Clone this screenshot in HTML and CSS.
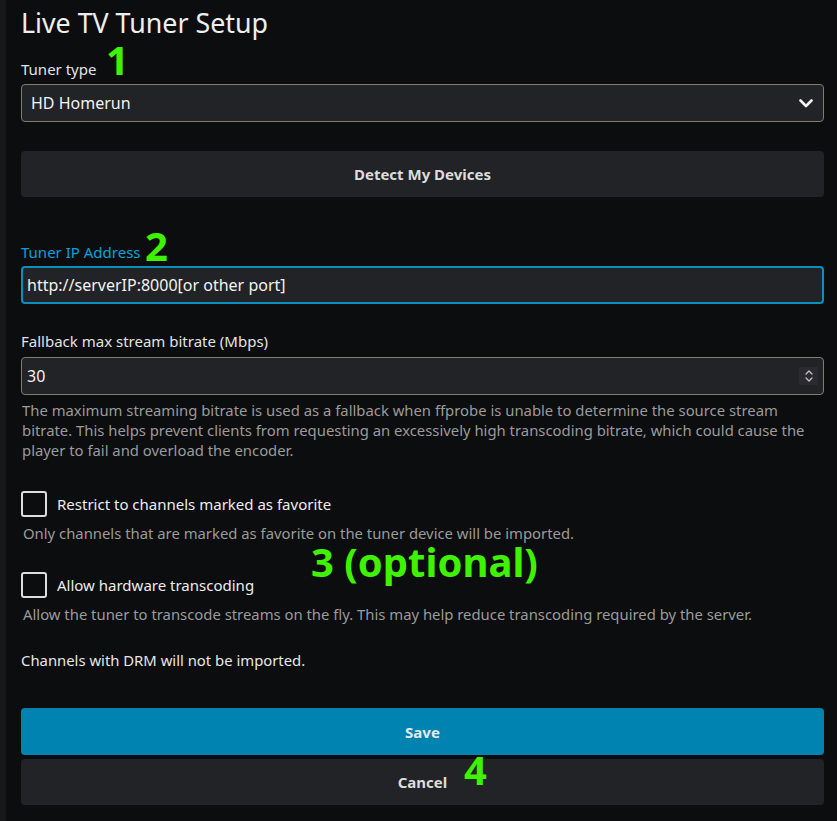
FILE: index.html
```html
<!DOCTYPE html>
<html lang="en">
<head>
  <meta charset="UTF-8" />
  <meta name="viewport" content="width=device-width, initial-scale=1" />
  <title>Live TV Tuner Setup</title>
  <link rel="stylesheet" href="styles.css">
</head>
<body>
  <div class="side-strip"></div>
  <main class="page">
    <h1 class="page-title">Live TV Tuner Setup</h1>

    <div class="field field-type">
      <label class="field-label">Tuner type</label>
      <span class="note note-1">1</span>
      <div class="select-box">
        <span>HD Homerun</span>
        <svg class="chevron" width="14" height="9" viewBox="0 0 14 9"><path d="M1.5 1.5 L7 7 L12.5 1.5" fill="none" stroke="#f2f2f2" stroke-width="2.6" stroke-linecap="round" stroke-linejoin="round"/></svg>
      </div>
    </div>

    <button class="btn btn-detect">Detect My Devices</button>

    <div class="field field-ip">
      <label class="field-label focused">Tuner IP Address</label>
      <span class="note note-2">2</span>
      <div class="text-input active">http://serverIP:8000[or other port]</div>
    </div>

    <div class="field field-bitrate">
      <label class="field-label">Fallback max stream bitrate (Mbps)</label>
      <div class="text-input">
        <span>30</span>
        <span class="spinner">
          <svg width="10" height="16" viewBox="0 0 10 16"><path d="M2 6 L5 3 L8 6 M2 10 L5 13 L8 10" fill="none" stroke="#c9c6cc" stroke-width="1.2" stroke-linecap="round" stroke-linejoin="round"/></svg>
        </span>
      </div>
      <p class="help">The maximum streaming bitrate is used as a fallback when ffprobe is unable to determine the source stream bitrate. This helps prevent clients from requesting an excessively high transcoding bitrate, which could cause the player to fail and overload the encoder.</p>
    </div>

    <div class="options">
      <span class="note note-3">3 (optional)</span>
      <div class="check-row">
        <span class="checkbox"></span>
        <span>Restrict to channels marked as favorite</span>
      </div>
      <p class="help help-check">Only channels that are marked as favorite on the tuner device will be imported.</p>

      <div class="check-row second">
        <span class="checkbox"></span>
        <span>Allow hardware transcoding</span>
      </div>
      <p class="help help-check">Allow the tuner to transcode streams on the fly. This may help reduce transcoding required by the server.</p>
    </div>

    <p class="drm-note">Channels with DRM will not be imported.</p>

    <div class="actions">
      <button class="btn btn-save">Save</button>
      <button class="btn btn-cancel">Cancel</button>
      <span class="note note-4">4</span>
    </div>
  </main>
</body>
</html>
```

FILE: styles.css
```css
body {
  margin: 0;
  height: 821px;
  overflow: hidden;
  background-color: #0c0d0f;
  font-family: 'Noto Sans', 'Open Sans', sans-serif;
  color: #e6e6e6;
  display: flex;
}

.side-strip {
  width: 6px;
  background-color: #17181a;
  flex-shrink: 0;
}

.page {
  flex: 1;
  padding: 0 13px 0 15px;
  position: relative;
}

.page-title {
  font-size: 26.8px;
  font-weight: 400;
  line-height: 32px;
  margin: 7px 0 0 0;
  color: #eeeeee;
}

.field {
  position: relative;
}

.field-label {
  display: block;
  font-size: 15px;
  line-height: 20px;
  color: #e2e2e2;
}

.field-type {
  padding-top: 20px;
}

.field-type .field-label {
  margin-bottom: 5px;
}

.field-label.focused {
  color: #00a4dc;
}

.note {
  position: absolute;
  color: #3ef200;
  font-weight: 700;
  font-size: 40px;
  line-height: 30px;
}

.note-1 { left: 85px; top: 6px; }
.note-2 { left: 124px; top: -11px; }
.note-3 { left: 290px; top: 56px; }
.note-4 { left: 443px; top: 47px; }

.select-box,
.text-input {
  box-sizing: border-box;
  height: 38px;
  border: 1px solid #857a6c;
  border-radius: 4px;
  background-color: #222326;
  padding: 0 9px;
  font-size: 16px;
  color: #f2f2f2;
  display: flex;
  align-items: center;
  justify-content: space-between;
}

.text-input {
  padding: 0 5px;
}

.text-input.active {
  border: 2px solid #0a8fc0;
  padding: 0 4px;
}

.chevron {
  margin-right: 1px;
}

.spinner {
  width: 19px;
  height: 18px;
  background-color: #2c2a31;
  display: flex;
  align-items: center;
  justify-content: center;
}

.btn {
  display: block;
  width: 100%;
  border: none;
  border-radius: 4px;
  font-family: inherit;
  font-size: 15px;
  font-weight: 700;
  color: #dcdcdc;
  cursor: pointer;
}

.btn-detect {
  height: 46px;
  margin-top: 29px;
  background-color: #222326;
}

.field-ip {
  margin-top: 45px;
}

.field-ip .field-label {
  margin-bottom: 4px;
}

.field-bitrate {
  margin-top: 27px;
}

.field-bitrate .field-label {
  margin-bottom: 6px;
}

.help {
  margin: 5px 2px 0 1px;
  font-size: 14.85px;
  line-height: 20px;
  color: #9b9b9b;
}

.options {
  position: relative;
  margin-top: 31px;
}

.check-row {
  display: flex;
  align-items: center;
  gap: 10px;
  font-size: 15px;
  color: #ececec;
}

.check-row.second {
  margin-top: 29px;
}

.checkbox {
  box-sizing: border-box;
  width: 26px;
  height: 26px;
  border: 2px solid #dddddd;
  border-radius: 3px;
}

.help-check {
  margin: 6px 0 0 2px;
}

.drm-note {
  margin: 26px 0 0 0;
  font-size: 14.85px;
  line-height: 20px;
  color: #e6e6e6;
}

.actions {
  position: relative;
  margin-top: 38px;
}

.btn-save {
  height: 47px;
  background-color: #0083b0;
  color: #e8e8e8;
}

.btn-cancel {
  height: 46px;
  margin-top: 4px;
  background-color: #222326;
}
```
